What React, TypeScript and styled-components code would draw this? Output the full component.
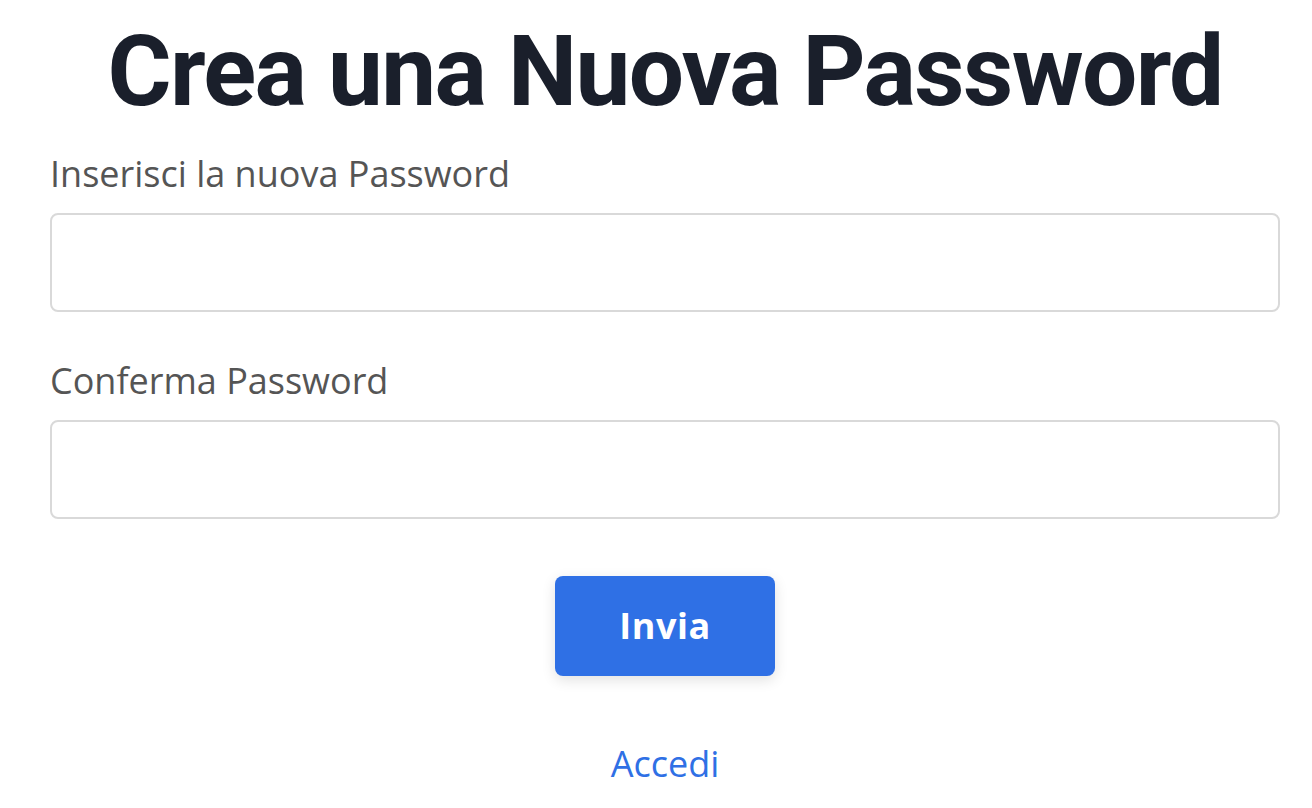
import React from "react";
import styled, { createGlobalStyle } from "styled-components";

const Global = createGlobalStyle`
  html, body { margin: 0; padding: 0; background: #ffffff; }
  * { box-sizing: border-box; }
`;

const Page = styled.main`
  display: flex;
  flex-direction: column;
  padding: 13px 32px 0 50px;
  font-family: "Open Sans", "Noto Sans", sans-serif;
`;

const Title = styled.h1`
  margin: 0;
  text-align: center;
  font-family: Roboto, "Noto Sans", sans-serif;
  font-weight: 700;
  font-size: 98px;
  line-height: 1.2;
  color: #1a1f2b;
  letter-spacing: -1.65px;
`;

const Form = styled.form`
  display: flex;
  flex-direction: column;
  margin-top: 16px;
`;

const Field = styled.div`
  display: flex;
  flex-direction: column;
  gap: 12px;
  & + & { margin-top: 42px; }
`;

const Label = styled.label`
  font-size: 36px;
  line-height: 54px;
  color: #555555;
`;

const Input = styled.input`
  height: 99px;
  width: 100%;
  border: 2px solid #d9d9d9;
  border-radius: 8px;
  background: #fff;
  font-size: 36px;
  padding: 0 20px;
  outline: none;
`;

const Actions = styled.div`
  display: flex;
  flex-direction: column;
  align-items: center;
  margin-top: 57px;
`;

const Button = styled.button`
  width: 220px;
  height: 100px;
  border: none;
  border-radius: 8px;
  background: #2f70e5;
  color: #ffffff;
  font-family: "Open Sans", sans-serif;
  font-weight: 700;
  font-size: 36px;
  letter-spacing: 0.5px;
  box-shadow: 0 4px 14px rgba(0, 0, 0, 0.12);
  cursor: pointer;
`;

const Link = styled.a`
  margin-top: 61px;
  font-size: 36px;
  line-height: 54px;
  color: #2f70e5;
  text-decoration: none;
`;

export default function App() {
  return (
    <>
      <Global />
      <Page>
        <Title>Crea una Nuova Password</Title>
        <Form onSubmit={(e) => e.preventDefault()}>
          <Field>
            <Label htmlFor="pw">Inserisci la nuova Password</Label>
            <Input id="pw" type="password" />
          </Field>
          <Field>
            <Label htmlFor="pw2">Conferma Password</Label>
            <Input id="pw2" type="password" />
          </Field>
          <Actions>
            <Button type="submit">Invia</Button>
            <Link href="#">Accedi</Link>
          </Actions>
        </Form>
      </Page>
    </>
  );
}
